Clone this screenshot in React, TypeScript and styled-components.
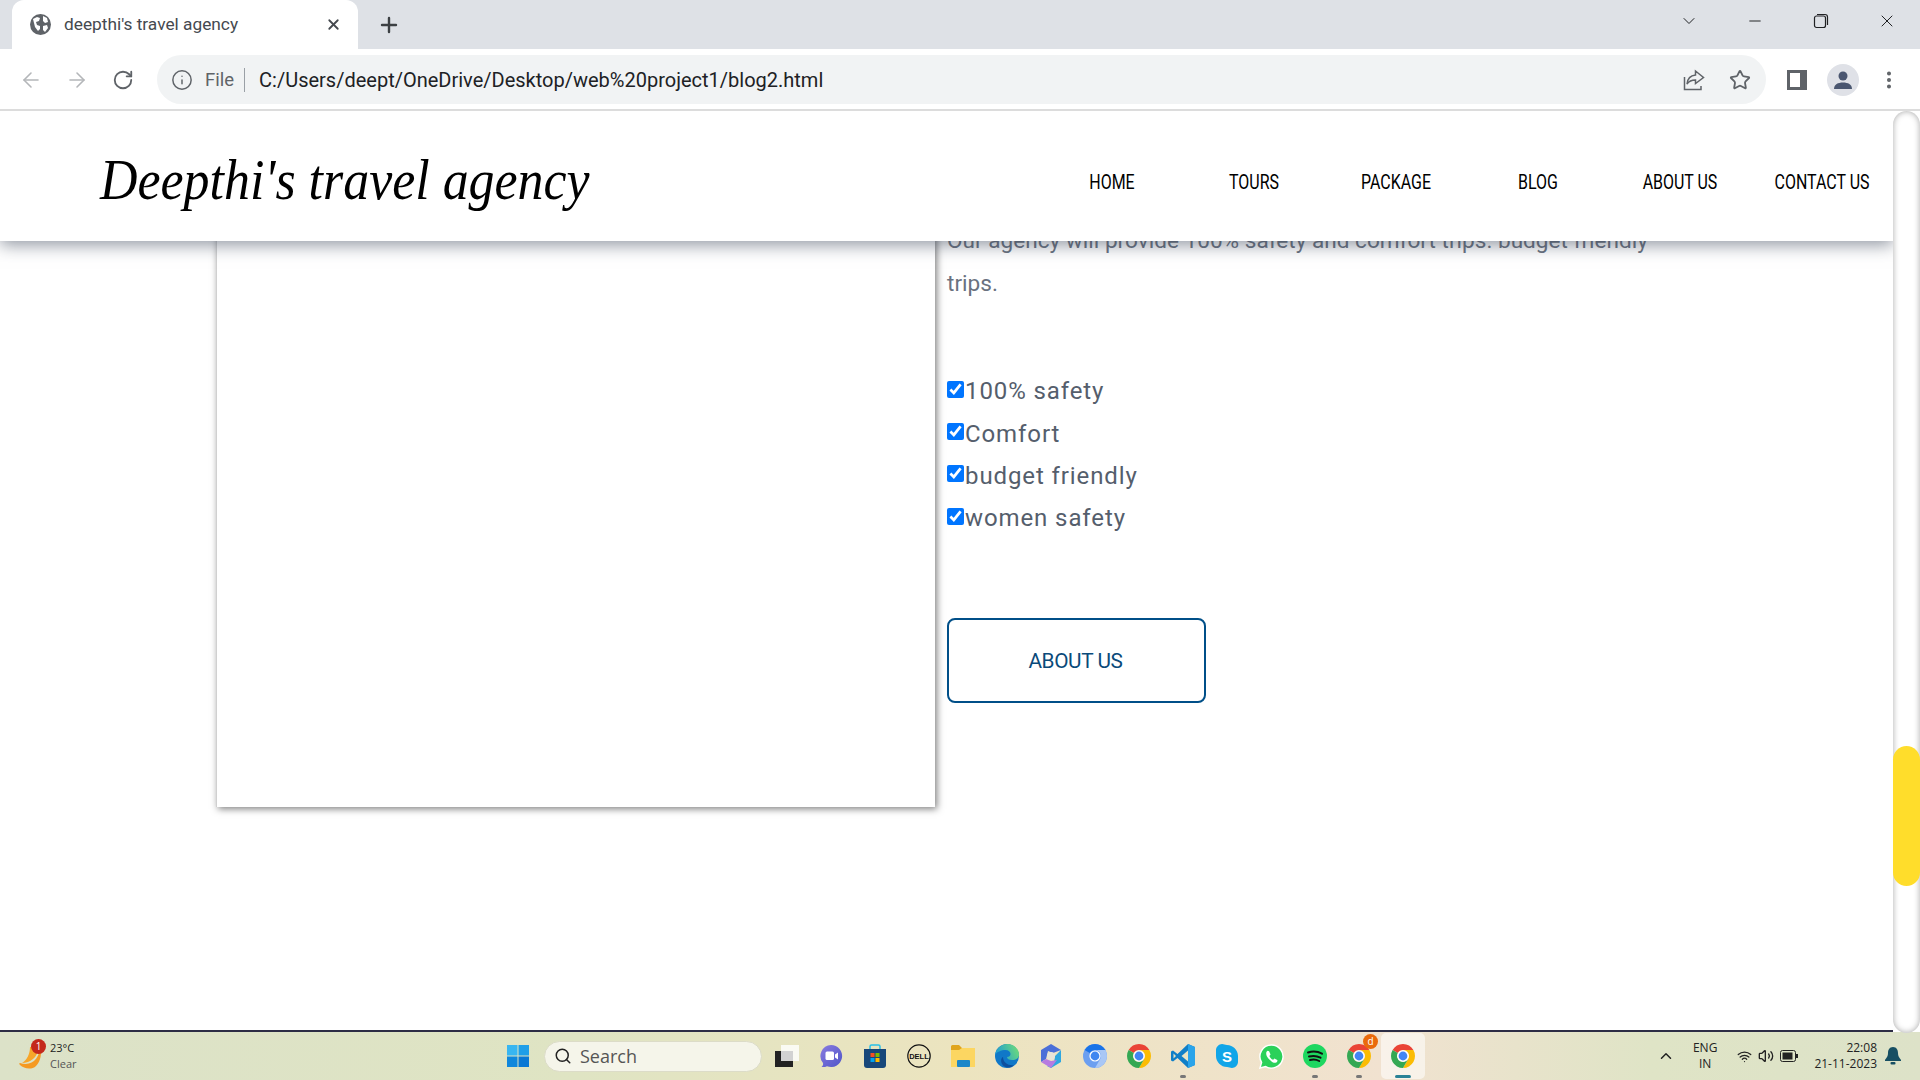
import React from "react";
import styled, { createGlobalStyle } from "styled-components";
import { ArrowLeft, ArrowRight, RotateCw, Info, Plus, X, ChevronDown, ChevronUp, Minus, Star, EllipsisVertical, Search as SearchIcon, Wifi, Volume2 } from "lucide-react";

const GlobalStyle = createGlobalStyle`
  html, body { margin: 0; height: 100%; overflow: hidden; background: #fff; }
  * { box-sizing: border-box; }
`;

const Screen = styled.div`
  height: 1080px;
  width: 1920px;
  display: flex;
  flex-direction: column;
  font-family: "Roboto", "Liberation Sans", sans-serif;
`;

// browser chrome
const TabStrip = styled.div`
  height: 49px;
  background: #dee1e6;
  display: flex;
  align-items: flex-end;
  padding-left: 12px;
`;

const Tab = styled.div`
  width: 346px;
  height: 49px;
  background: #fff;
  border-radius: 12px 12px 0 0;
  display: flex;
  align-items: center;
  padding: 0 16px 0 18px;
  color: #45494f;
  font-size: 17.300px;
`;

const TabTitle = styled.span`
  margin: 0 0 2px 13px;
  flex: 1;
`;

const NewTab = styled.div`
  width: 62px;
  height: 49px;
  display: flex;
  align-items: center;
  justify-content: center;
  color: #3c4043;
`;

const WindowControls = styled.div`
  margin-left: auto;
  height: 49px;
  display: flex;
  align-items: flex-start;
  padding-top: 6px;
  color: #202124;
`;

const WindowButton = styled.div`
  width: 66px;
  height: 30px;
  display: flex;
  align-items: center;
  justify-content: center;
`;

const Toolbar = styled.div`
  height: 62px;
  background: #fff;
  border-bottom: 2px solid #dcdcdc;
  display: flex;
  align-items: center;
`;

const NavButton = styled.div<{ $dim?: boolean }>`
  width: 46px;
  height: 46px;
  display: flex;
  align-items: center;
  justify-content: center;
  color: ${(p) => (p.$dim ? "#b4b6b9" : "#5f6368")};
`;

const NavButtons = styled.div`
  width: 157px;
  padding: 2px 0 0 8px;
  display: flex;
`;

const Omnibox = styled.div`
  width: 1609px;
  height: 49px;
  background: #f1f3f4;
  border-radius: 25px;
  display: flex;
  align-items: center;
  padding: 2px 3px 0 14px;
  font-size: 18.500px;
`;

const FileLabel = styled.span`
  color: #5f6368;
  margin-left: 12px;
  padding-right: 10px;
  border-right: 1px solid #9aa0a6;
  line-height: 24px;
`;

const Url = styled.span`
  color: #202124;
  font-size: 20px;
  margin-left: 14px;
  flex: 1;
`;

const OmniIcon = styled.div<{ $narrow?: boolean }>`
  width: ${(p) => (p.$narrow ? "28px" : "46px")};
  display: flex;
  justify-content: center;
  color: #5f6368;
`;

const ToolbarRight = styled.div`
  display: flex;
  align-items: center;
  padding: 2px 0 0 8px;
`;

const Avatar = styled.div`
  width: 32px;
  height: 32px;
  border-radius: 50%;
  background: #dfe1e7;
  display: flex;
  align-items: center;
  justify-content: center;
  margin: 0 16px 0 7px;
`;

// page
const Viewport = styled.div`
  flex: 1;
  display: flex;
  min-height: 0;
`;

const Page = styled.div`
  flex: 1;
  position: relative;
  background: #fff;
  border-bottom: 2px solid #2d2d45;
  overflow: hidden;
`;

const Header = styled.header`
  position: absolute;
  top: 0;
  left: 0;
  right: 0;
  height: 130px;
  background: #fff;
  box-shadow: 0 4px 16px rgba(55, 65, 85, 0.55);
  display: flex;
  align-items: center;
  justify-content: space-between;
  padding-left: 100px;
  z-index: 2;
`;

// no script font installed here, closest is the serif italic pulled in a bit
const Logo = styled.div`
  font-family: "Liberation Serif", serif;
  font-style: italic;
  font-size: 58px;
  color: #000;
  white-space: nowrap;
  margin-top: 6px;
  width: 0;
  transform: scaleX(0.895);
  transform-origin: left center;
`;

const Menu = styled.nav`
  display: grid;
  grid-template-columns: repeat(6, 142px);
  margin-top: 12px;
`;

const MenuItem = styled.a`
  font-family: "Roboto", sans-serif;
  font-size: 21px;
  color: #000;
  text-align: center;
  white-space: nowrap;
  transform: scaleX(0.76);
`;

const Content = styled.div`
  display: flex;
  align-items: flex-start;
  padding-left: 216px;
`;

const Card = styled.div`
  width: 719px;
  height: 696px;
  background: #fff;
  border-left: 1px solid #d0d0d0;
  box-shadow: 2px 2px 7px rgba(0, 0, 0, 0.5);
`;

const Details = styled.div`
  margin-left: 12px;
  padding-top: 108px;
  width: 720px;
`;

const Para = styled.p`
  margin: 0;
  font-size: 22.600px;
  line-height: 43px;
  color: #6a7280;
`;

const Checks = styled.div`
  margin-top: 65px;
  display: flex;
  flex-direction: column;
`;

const Check = styled.label`
  height: 42.400px;
  display: flex;
  align-items: center;
  font-size: 24px;
  letter-spacing: 0.9px;
  color: #555e6c;
`;

const Box = styled.input`
  width: 17px;
  height: 17px;
  margin: -4px 1px 0 0;
  accent-color: #0075ff;
`;

const AboutButton = styled.a`
  margin-top: 78px;
  width: 259px;
  height: 85px;
  padding: 1px 2px 0 0;
  border: 2px solid #004f88;
  border-radius: 8px;
  display: flex;
  align-items: center;
  justify-content: center;
  font-size: 20.800px;
  letter-spacing: -0.4px;
  color: #0a4a7a;
`;

const Track = styled.div`
  width: 27px;
  height: 922px;
  position: relative;
  z-index: 3;
  background: #fff;
  border-radius: 14px;
  box-shadow: inset 0 0 6px rgba(0, 0, 0, 0.35);
`;

const Thumb = styled.div`
  position: absolute;
  top: 635px;
  left: 0;
  right: 0;
  height: 140px;
  border-radius: 14px;
  background: #ffdd2b;
`;

// windows taskbar
const Taskbar = styled.div`
  height: 48px;
  background: linear-gradient(90deg, #dce2c8 0%, #dfe4c3 30%, #ece4bf 50%, #f1e2d0 72%, #dfe4c6 86%, #dde2c8 100%);
  display: flex;
  align-items: center;
  font-family: "Open Sans", sans-serif;
  position: relative;
`;

const Weather = styled.div`
  width: 496px;
  display: flex;
  align-items: center;
  padding-left: 18px;
  gap: 4px;
`;

const WeatherIcon = styled.div`
  position: relative;
  width: 28px;
  height: 30px;
`;

const Badge = styled.span<{ $bg: string; $large?: boolean }>`
  position: absolute;
  top: ${(p) => (p.$large ? "1px" : "-2px")};
  right: ${(p) => (p.$large ? "3px" : "0")};
  width: 15px;
  height: 15px;
  border-radius: 50%;
  background: ${(p) => p.$bg};
  color: #fff;
  font-size: 10px;
  line-height: 15px;
  text-align: center;
`;

const WeatherText = styled.div`
  font-size: 11px;
  line-height: 16px;
  color: #222;
  span { display: block; color: #555; }
`;

const TaskIcon = styled.div<{ $active?: boolean; $dot?: boolean }>`
  width: 44px;
  height: 46px;
  position: relative;
  display: flex;
  align-items: center;
  justify-content: center;
  border-radius: 5px;
  background: ${(p) => (p.$active ? "rgba(255,255,255,.55)" : "transparent")};
  &::after {
    content: "";
    display: ${(p) => (p.$dot || p.$active ? "block" : "none")};
    position: absolute;
    bottom: 1px;
    left: 50%;
    transform: translateX(-50%);
    width: ${(p) => (p.$active ? "16px" : "6px")};
    height: 3px;
    border-radius: 2px;
    background: ${(p) => (p.$active ? "#2a8296" : "#777")};
  }
`;

const SearchBox = styled.div`
  width: 218px;
  height: 31px;
  margin: 0 3px 0 4px;
  border-radius: 16px;
  background: #f5f5ea;
  border: 1px solid #dcdcc8;
  display: flex;
  align-items: center;
  padding-left: 9px;
  gap: 8px;
  font-size: 18px;
  color: #555;
`;

const Tray = styled.div`
  margin-left: auto;
  display: flex;
  align-items: center;
  color: #222;
  padding-right: 19px;
`;

const Lang = styled.div`
  font-size: 12px;
  line-height: 16px;
  text-align: center;
  margin: 0 20px 0 18px;
`;

const Clock = styled.div`
  font-size: 12px;
  line-height: 16px;
  text-align: right;
  margin: 0 8px 0 16px;
`;

const VolumeWrap = styled.span`
  display: flex;
  margin: 0 6px;
`;

const WinLogo = () => (
  <svg width="22" height="22" viewBox="0 0 22 22">
    <rect x="0" y="0" width="10.500" height="10.500" fill="#38b6f1" />
    <rect x="11.500" y="0" width="10.500" height="10.500" fill="#1f9fe8" />
    <rect x="0" y="11.500" width="10.500" height="10.500" fill="#0f87dc" />
    <rect x="11.500" y="11.500" width="10.500" height="10.500" fill="#0a78d4" />
  </svg>
);

const ChromeIcon = () => (
  <svg width="24" height="24" viewBox="0 0 24 24">
    <path d="M12 0A12 12 0 0 1 22.390 6H12A6 6 0 0 0 6.800 9L1.610 6A12 12 0 0 1 12 0z" fill="#ea4335" />
    <path d="M22.390 6A12 12 0 0 1 12 24L17.200 15A6 6 0 0 0 12 6z" fill="#fbbc04" />
    <path d="M1.610 6A12 12 0 0 0 12 24L17.200 15A6 6 0 0 1 6.800 9z" fill="#34a853" />
    <circle cx="12" cy="12" r="5.600" fill="#fff" />
    <circle cx="12" cy="12" r="4.400" fill="#4285f4" />
  </svg>
);

const ExplorerIcon = () => (
  <svg width="24" height="22" viewBox="0 0 24 22">
    <rect x="0" y="6" width="18" height="16" fill="#222" />
    <rect x="6" y="0" width="18" height="16" fill="#fff" fillOpacity="0.8" />
  </svg>
);

const TeamsIcon = () => (
  <svg width="24" height="24" viewBox="0 0 24 24">
    <defs>
      <linearGradient id="teams" x1="0" y1="0" x2="1" y2="1">
        <stop offset="0" stopColor="#8a7ce0" />
        <stop offset="1" stopColor="#4f55c8" />
      </linearGradient>
    </defs>
    <path d="M12 1a11 11 0 1 1 -4 21.200c-1.500 .8-3.500 1-5.500 .8 1.500-1.200 1.800-2.500 1.500-4A11 11 0 0 1 12 1z" fill="url(#teams)" />
    <rect x="6.500" y="7.500" width="8.500" height="8.500" rx="1.500" fill="#fff" />
    <path d="M16 10.500l3-2v7l-3-2z" fill="#fff" />
  </svg>
);

const StoreIcon = () => (
  <svg width="24" height="24" viewBox="0 0 24 24">
    <path d="M7 5V2.500A1.500 1.500 0 0 1 8.500 1h7A1.500 1.500 0 0 1 17 2.500V5" fill="none" stroke="#29c0e8" strokeWidth="1.500" />
    <path d="M1 5h22v16a3 3 0 0 1-3 3H4a3 3 0 0 1-3-3z" fill="#17477a" />
    <rect x="7.500" y="9" width="4" height="4" fill="#f25022" />
    <rect x="12.500" y="9" width="4" height="4" fill="#7fba00" />
    <rect x="7.500" y="14" width="4" height="4" fill="#00a4ef" />
    <rect x="12.500" y="14" width="4" height="4" fill="#ffb900" />
  </svg>
);

const DellIcon = () => (
  <svg width="24" height="24" viewBox="0 0 24 24">
    <circle cx="12" cy="12" r="11.200" fill="none" stroke="#111" strokeWidth="1.200" />
    <text x="12" y="14.700" textAnchor="middle" fontSize="7.500" fontWeight="700" fontFamily="Liberation Sans" fill="#111">DELL</text>
  </svg>
);

const FolderIcon = () => (
  <svg width="24" height="22" viewBox="0 0 24 22">
    <path d="M0 1.500A1.500 1.500 0 0 1 1.500 0H8l3 3H0z" fill="#e0a51c" />
    <path d="M0 3h24v19H0z" fill="#fcd661" />
    <path d="M0 3h11l-3 2H0z" fill="#e0a51c" />
    <rect x="6" y="15" width="13" height="7" rx="1" fill="#1b87c9" />
  </svg>
);

const EdgeIcon = () => (
  <svg width="24" height="24" viewBox="0 0 24 24">
    <defs>
      <linearGradient id="edgeTop" x1="0" y1="0.600" x2="1" y2="0.300">
        <stop offset="0" stopColor="#1a9ad6" />
        <stop offset="1" stopColor="#6fdc78" />
      </linearGradient>
    </defs>
    <circle cx="12" cy="12" r="12" fill="#1078c8" />
    <path d="M0 11C1 4 7 0 12 0c7 0 12 5 12 11 0 3-3 5-7 5-3 0-5-1-5-3 2 0 3.500-1 3.500-3 0-2-2-4-5-4-4 0-9 2-10.500 5z" fill="url(#edgeTop)" />
    <path d="M8 13c0 6 6 9 11 8-4 4-10 3-12-1-1.500-2.500-1-6 1-7z" fill="#0c4f9e" />
  </svg>
);

const CopilotIcon = () => (
  <svg width="20" height="24" viewBox="0 0 20 24">
    <path d="M10 0L20 6 12 9 7 7 5 15 0 18V6z" fill="#4b6fd8" />
    <path d="M20 6v12l-10 6-4-2 7-3 1-7z" fill="#2fa7e0" />
    <path d="M0 18l5-3 5 2 6-1 -6 8z" fill="#b67be0" />
    <circle cx="10" cy="12" r="4" fill="#e8e4d8" />
  </svg>
);

const BlueChrome = () => (
  <svg width="24" height="24" viewBox="0 0 24 24">
    <circle cx="12" cy="12" r="12" fill="#6c9ff0" />
    <path d="M12 0A12 12 0 0 1 22.390 6H12A6 6 0 0 0 6.800 9L1.610 6A12 12 0 0 1 12 0z" fill="#1a73e8" />
    <path d="M22.390 6A12 12 0 0 1 12 24L17.200 15A6 6 0 0 0 12 6z" fill="#a9c7f5" />
    <circle cx="12" cy="12" r="5.600" fill="#fff" />
    <circle cx="12" cy="12" r="4.400" fill="#3f86f0" />
  </svg>
);

const VsCodeIcon = () => (
  <svg width="24" height="24" viewBox="0 0 24 24">
    <path d="M17 0l7 3v18l-7 3L6.500 14 2 17.500 0 16.500v-9L2 6.500 6.500 10z" fill="#0f7fc8" />
    <path d="M17 0l7 3v18l-7 3z" fill="#2aa4ea" />
    <path d="M17 6.500L10.500 12l6.500 5.500z" fill="#e8e4c4" />
    <path d="M2.500 9.500L5 12l-2.500 2.500z" fill="#e8e4c4" />
  </svg>
);

const SkypeIcon = () => (
  <svg width="22" height="24" viewBox="0 0 22 24">
    <path d="M6 0c2 0 3 1 5 1 6 0 11 5 11 11 0 2 0 3 0 6 0 3-3 6-6 6-2 0-3-1-5-1C5 23 0 18 0 12c0-2 0-3 0-6 0-3 3-6 6-6z" fill="#11a5e8" />
    <text x="11" y="17.500" textAnchor="middle" fontSize="15" fontWeight="700" fontFamily="Liberation Sans" fill="#fff">S</text>
  </svg>
);

const WhatsAppIcon = () => (
  <svg width="25" height="25" viewBox="0 0 26 26">
    <path d="M13 1a12 12 0 1 1-6 22.400L1 25l1.700-5.800A12 12 0 0 1 13 1z" fill="#2bd15a" stroke="#fff" strokeWidth="1.500" />
    <path d="M9 7c-2 1-2 4 0 7s6 6 8 5.500 2.500-2 2-2.800l-3-1.500-1.200 1.300c-1.500-.5-3.500-2.500-4-4L12 11l-1.500-3.500z" fill="#fff" />
  </svg>
);

const SpotifyIcon = () => (
  <svg width="24" height="24" viewBox="0 0 24 24">
    <circle cx="12" cy="12" r="12" fill="#1ed760" />
    <path d="M5 8.500c5-1.500 10-1 14 1.200M6 12.500c4-1 8-.7 11.500 1.200M7 16c3.500-.8 6.500-.5 9.200 1" fill="none" stroke="#111" strokeWidth="2" strokeLinecap="round" />
  </svg>
);

const SidePanelIcon = () => (
  <svg width="22" height="22" viewBox="0 0 22 22">
    <rect x="1" y="1" width="20" height="20" fill="#5f6368" />
    <rect x="4" y="4" width="10" height="14" fill="#fff" />
  </svg>
);

const RestoreIcon = () => (
  <svg width="16" height="16" viewBox="0 0 16 16" fill="none" stroke="#202124" strokeWidth="1.200">
    <rect x="1.500" y="3" width="11" height="11.500" rx="2" />
    <path d="M4 1.500h8a2.500 2.500 0 0 1 2.500 2.500v8" />
  </svg>
);

const ShareIcon = () => (
  <svg width="24" height="24" viewBox="0 0 24 24" fill="none" stroke="#5f6368" strokeWidth="1.500">
    <path d="M2.500 9v12.500H19V18" />
    <path d="M13.500 3l8 6.500-8 6V12c-4 0-6.500 1-8.500 4 .5-5 3.500-8.500 8.500-9z" />
  </svg>
);

const PersonIcon = () => (
  <svg width="20" height="20" viewBox="0 0 20 20" fill="#4a5670">
    <circle cx="10" cy="6" r="4.500" />
    <path d="M1 19c0-4.500 4-6.500 9-6.500s9 2 9 6.500z" />
  </svg>
);

const GlobeIcon = () => (
  <svg width="21" height="21" viewBox="0 0 21 21">
    <circle cx="10.500" cy="10.500" r="10.500" fill="#5f6368" />
    <path d="M3 5l4-2 3 1-1 3-3 1 1 3 3 1v3l-2 2-3-4zM13 2l4 2 1 4-3 1-2-2zM13 12l4-1 1 3-3 4-2-2z" fill="#fff" />
  </svg>
);

const WeatherGlyph = () => (
  <svg width="24" height="30" viewBox="0 0 24 30">
    <path d="M22 5c0 12-8 21-20 17-1 0-1 1 0 2 4 4 12 5 16 1 5-5 6-13 4-20z" fill="#f59a23" />
    <path d="M12 6c4 0 8 2 8 2 0 8-8 14-16 14 5-3 8-9 8-16z" fill="#f7a62a" />
  </svg>
);

const BatteryIcon = () => (
  <svg width="18" height="12" viewBox="0 0 18 12">
    <rect x="0.500" y="0.500" width="15" height="11" rx="2" fill="none" stroke="#222" />
    <rect x="2.500" y="2.500" width="10" height="7" fill="#222" />
    <rect x="16" y="4" width="2" height="4" fill="#222" />
  </svg>
);

const BellIcon = () => (
  <svg width="16" height="18" viewBox="0 0 16 18" fill="#174f63">
    <path d="M8 0c3.500 0 5 3 5 6 0 4 2 5 3 7v1H0v-1c1-2 3-3 3-7 0-3 1.500-6 5-6z" />
    <rect x="5.500" y="15" width="5" height="2.500" rx="1" />
  </svg>
);

const menu = ["HOME", "TOURS", "PACKAGE", "BLOG", "ABOUT US", "CONTACT US"];
const checks = ["100% safety", "Comfort", "budget friendly", "women safety"];

export default function App() {
  return (
    <>
      <GlobalStyle />
      <Screen>
        <TabStrip>
          <Tab>
            <GlobeIcon />
            <TabTitle>deepthi's travel agency</TabTitle>
            <X size={17} strokeWidth={2.5} color="#45494f" />
          </Tab>
          <NewTab>
            <Plus size={24} strokeWidth={2.4} />
          </NewTab>
          <WindowControls>
            <WindowButton><ChevronDown size={20} strokeWidth={1.2} /></WindowButton>
            <WindowButton><Minus size={18} strokeWidth={1.3} /></WindowButton>
            <WindowButton><RestoreIcon /></WindowButton>
            <WindowButton><X size={20} strokeWidth={1.2} /></WindowButton>
          </WindowControls>
        </TabStrip>
        <Toolbar>
          <NavButtons>
            <NavButton $dim><ArrowLeft size={24} strokeWidth={1.6} /></NavButton>
            <NavButton $dim><ArrowRight size={24} strokeWidth={1.6} /></NavButton>
            <NavButton><RotateCw size={22} strokeWidth={2} /></NavButton>
          </NavButtons>
          <Omnibox>
            <Info size={22} strokeWidth={1.6} color="#5f6368" />
            <FileLabel>File</FileLabel>
            <Url>C:/Users/deept/OneDrive/Desktop/web%20project1/blog2.html</Url>
            <OmniIcon><ShareIcon /></OmniIcon>
            <OmniIcon><Star size={22} strokeWidth={2} /></OmniIcon>
          </Omnibox>
          <ToolbarRight>
            <OmniIcon><SidePanelIcon /></OmniIcon>
            <Avatar><PersonIcon /></Avatar>
            <OmniIcon $narrow><EllipsisVertical size={22} strokeWidth={2.4} /></OmniIcon>
          </ToolbarRight>
        </Toolbar>
        <Viewport>
          <Page>
            <Header>
              <Logo>Deepthi's travel agency</Logo>
              <Menu>
                {menu.map((m) => (
                  <MenuItem key={m}>{m}</MenuItem>
                ))}
              </Menu>
            </Header>
            <Content>
              <Card />
              <Details>
                <Para>Our agency will provide 100% safety and comfort trips. budget friendly trips.</Para>
                <Checks>
                  {checks.map((c) => (
                    <Check key={c}>
                      <Box type="checkbox" defaultChecked />
                      {c}
                    </Check>
                  ))}
                </Checks>
                <AboutButton>ABOUT US</AboutButton>
              </Details>
            </Content>
          </Page>
          <Track>
            <Thumb />
          </Track>
        </Viewport>
        <Taskbar>
          <Weather>
            <WeatherIcon>
              <WeatherGlyph />
              <Badge $bg="#c4281c">1</Badge>
            </WeatherIcon>
            <WeatherText>
              23°C
              <span>Clear</span>
            </WeatherText>
          </Weather>
          <TaskIcon><WinLogo /></TaskIcon>
          <SearchBox>
            <SearchIcon size={18} color="#222" />
            Search
          </SearchBox>
          <TaskIcon><ExplorerIcon /></TaskIcon>
          <TaskIcon><TeamsIcon /></TaskIcon>
          <TaskIcon><StoreIcon /></TaskIcon>
          <TaskIcon><DellIcon /></TaskIcon>
          <TaskIcon><FolderIcon /></TaskIcon>
          <TaskIcon><EdgeIcon /></TaskIcon>
          <TaskIcon><CopilotIcon /></TaskIcon>
          <TaskIcon><BlueChrome /></TaskIcon>
          <TaskIcon><ChromeIcon /></TaskIcon>
          <TaskIcon $dot><VsCodeIcon /></TaskIcon>
          <TaskIcon><SkypeIcon /></TaskIcon>
          <TaskIcon><WhatsAppIcon /></TaskIcon>
          <TaskIcon $dot><SpotifyIcon /></TaskIcon>
          <TaskIcon $dot>
            <ChromeIcon />
            <Badge $bg="#ea6a0c" $large>d</Badge>
          </TaskIcon>
          <TaskIcon $active><ChromeIcon /></TaskIcon>
          <Tray>
            <ChevronUp size={18} />
            <Lang>ENG<br />IN</Lang>
            <Wifi size={15} />
            <VolumeWrap><Volume2 size={16} /></VolumeWrap>
            <BatteryIcon />
            <Clock>22:08<br />21-11-2023</Clock>
            <BellIcon />
          </Tray>
        </Taskbar>
      </Screen>
    </>
  );
}
